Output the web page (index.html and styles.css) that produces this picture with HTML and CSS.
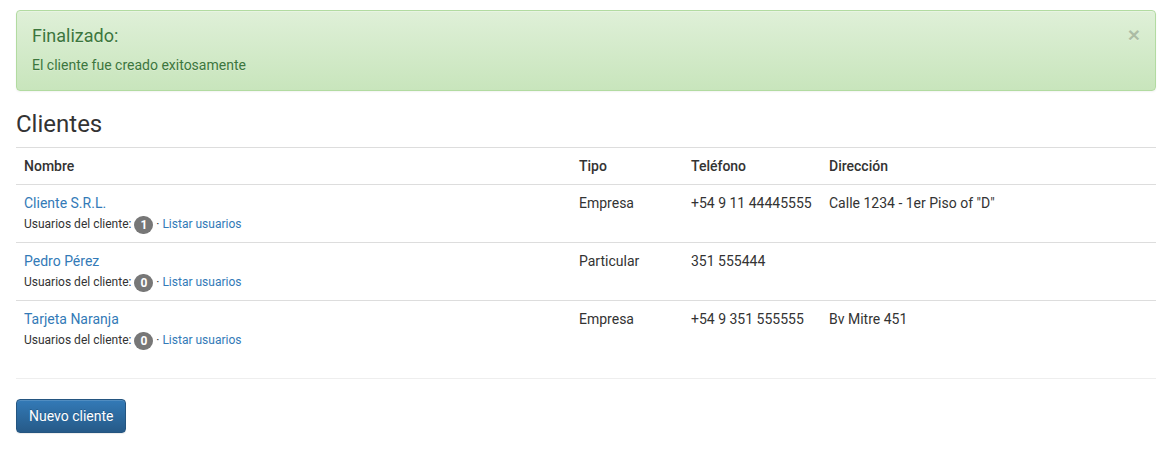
FILE: index.html
```html
<!DOCTYPE html>
<html lang="es">
<head>
<meta charset="utf-8">
<title>Clientes</title>
<link rel="stylesheet" href="styles.css">
</head>
<body>
<div class="container">
  <div class="alert">
    <button class="close" type="button">×</button>
    <h4 class="alert-title">Finalizado:</h4>
    <p class="alert-text">El cliente fue creado exitosamente</p>
  </div>

  <h3 class="page-title">Clientes</h3>

  <table class="table">
    <thead>
      <tr>
        <th class="col-name">Nombre</th>
        <th class="col-type">Tipo</th>
        <th class="col-phone">Teléfono</th>
        <th>Dirección</th>
      </tr>
    </thead>
    <tbody>
      <tr>
        <td><a href="#">Cliente S.R.L.</a><div class="meta">Usuarios del cliente: <span class="badge">1</span> · <a href="#">Listar usuarios</a></div></td>
        <td>Empresa</td>
        <td>+54 9 11 44445555</td>
        <td>Calle 1234 - 1er Piso of "D"</td>
      </tr>
      <tr>
        <td><a href="#">Pedro Pérez</a><div class="meta">Usuarios del cliente: <span class="badge">0</span> · <a href="#">Listar usuarios</a></div></td>
        <td>Particular</td>
        <td>351 555444</td>
        <td></td>
      </tr>
      <tr>
        <td><a href="#">Tarjeta Naranja</a><div class="meta">Usuarios del cliente: <span class="badge">0</span> · <a href="#">Listar usuarios</a></div></td>
        <td>Empresa</td>
        <td>+54 9 351 555555</td>
        <td>Bv Mitre 451</td>
      </tr>
    </tbody>
  </table>

  <hr class="divider">

  <a href="#" class="btn-primary">Nuevo cliente</a>
</div>
</body>
</html>
```

FILE: styles.css
```css
* { box-sizing: border-box; }
html, body { margin: 0; padding: 0; background: #fff; }
body {
  font-family: Roboto, "Liberation Sans", Arial, sans-serif;
  font-size: 14px;
  line-height: 1.42857;
  color: #333;
}
a { color: #337ab7; text-decoration: none; }

.container { padding: 10px 16px 20px; }

.alert {
  position: relative;
  padding: 15px 35px 14px 15px;
  margin-bottom: 20px;
  border: 1px solid #b2dba1;
  border-radius: 4px;
  color: #3c763d;
  background-image: linear-gradient(to bottom, #dff0d8 0, #c8e5bc 100%);
  box-shadow: inset 0 1px 0 rgba(255,255,255,.25), 0 1px 2px rgba(0,0,0,.05);
  text-shadow: 0 1px 0 rgba(255,255,255,.2);
}
.alert-title {
  margin: 0 0 10px;
  font-size: 18px;
  font-weight: 400;
  line-height: 1.1;
  color: inherit;
}
.alert-text { margin: 0; }
.close {
  position: absolute;
  top: 13px;
  right: 15px;
  padding: 0;
  border: 0;
  background: transparent;
  font-family: "Liberation Sans", Arial, sans-serif;
  font-size: 21px;
  font-weight: 700;
  line-height: 1;
  color: #000;
  opacity: .2;
  text-shadow: 0 1px 0 #fff;
  cursor: pointer;
}

.page-title {
  margin: 20px 0 10px;
  font-size: 24px;
  font-weight: 400;
  line-height: 1.1;
}

.table {
  width: 100%;
  border-collapse: collapse;
  border-spacing: 0;
  margin-bottom: 20px;
}
.table th, .table td {
  padding: 8px;
  text-align: left;
  vertical-align: top;
  line-height: 20px;
  border-top: 1px solid #ddd;
}
.table td { padding-bottom: 7px; }
.table th { font-weight: 500; }
.col-name { width: 555px; }
.col-type { width: 112px; }
.col-phone { width: 138px; }

.meta { font-size: 12px; line-height: 21px; padding-top: 1px; }
.badge {
  display: inline-block;
  min-width: 10px;
  padding: 3px 6px;
  font-size: 12px;
  font-weight: 700;
  line-height: 1;
  color: #fff;
  text-align: center;
  vertical-align: middle;
  background-color: #777;
  border-radius: 10px;
}

.divider {
  margin: 0 0 20px;
  border: 0;
  border-top: 1px solid #eee;
}

.btn-primary {
  display: inline-block;
  padding: 6px 12px;
  font-size: 14px;
  line-height: 20px;
  color: #fff;
  border: 1px solid #245580;
  border-radius: 4px;
  background-image: linear-gradient(to bottom, #337ab7 0, #265a88 100%);
  text-shadow: 0 -1px 0 rgba(0,0,0,.2);
  box-shadow: inset 0 1px 0 rgba(255,255,255,.15), 0 1px 1px rgba(0,0,0,.075);
}
```
